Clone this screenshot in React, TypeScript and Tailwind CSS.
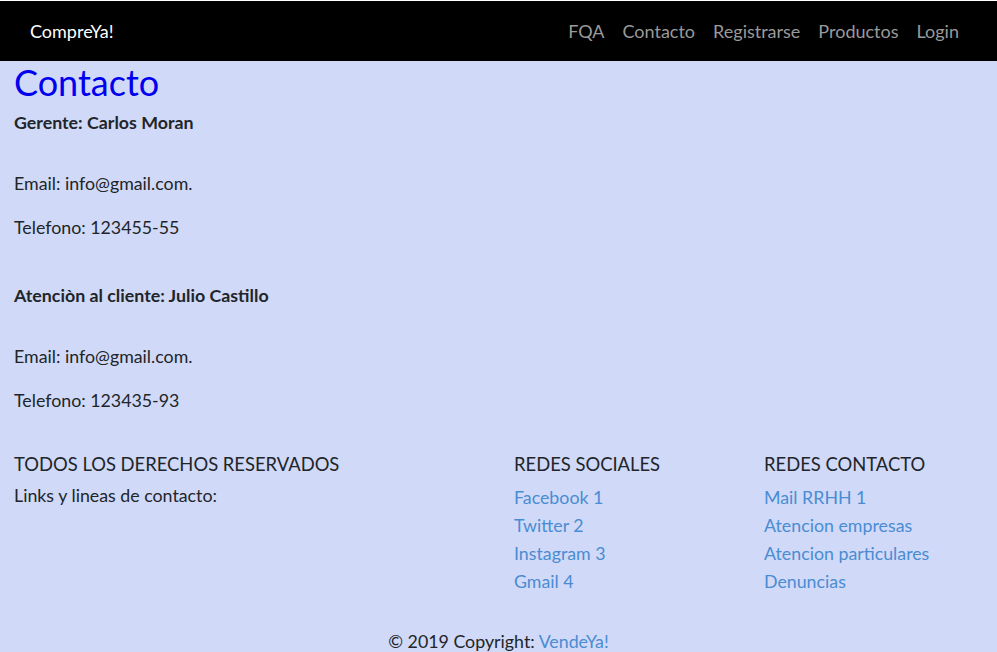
import React from "react";

export default function App() {
  const font = { fontFamily: "Lato, 'Noto Sans', sans-serif" };
  return (
    <div className="min-h-[652px] w-full bg-[#d0d9f7] text-[17.8px] text-[#212529]" style={font}>
      <div className="h-px bg-white" />
      <nav className="flex h-[60px] items-center justify-between bg-black pl-[30px] pr-[38px]">
        <span className="text-[18px] text-white">CompreYa!</span>
        <div className="flex gap-[18px] text-[18px] text-[#9a9a9a]">
          <span>FQA</span>
          <span>Contacto</span>
          <span>Registrarse</span>
          <span>Productos</span>
          <span>Login</span>
        </div>
      </nav>
      <main className="px-[14px]">
        <h1 className="text-[36px] leading-[42px] text-[#0000ee]">Contacto</h1>
        <p className="mt-[7px] text-[17.8px] font-bold leading-[24px]">Gerente: Carlos Moran</p>
        <p className="mt-[37px] leading-[24px]">Email: info@gmail.com.</p>
        <p className="mt-[20px] leading-[24px]">Telefono: 123455-55</p>
        <p className="mt-[44px] text-[17.8px] font-bold leading-[24px]">Atenciòn al cliente: Julio Castillo</p>
        <p className="mt-[37px] leading-[24px]">Email: info@gmail.com.</p>
        <p className="mt-[20px] leading-[24px]">Telefono: 123435-93</p>
      </main>
      <footer className="mt-[40px]">
        <div className="grid grid-cols-[500px_250px_1fr] px-[14px]">
          <div>
            <h5 className="text-[18.4px] leading-[24px]">TODOS LOS DERECHOS RESERVADOS</h5>
            <p className="mt-[7px] leading-[24px]">Links y lineas de contacto:</p>
          </div>
          <div>
            <h5 className="text-[18.4px] leading-[24px]">REDES SOCIALES</h5>
            <ul className="mt-[7px] text-[#4a8cd3]">
              <li className="leading-[28px]">Facebook 1</li>
              <li className="leading-[28px]">Twitter 2</li>
              <li className="leading-[28px]">Instagram 3</li>
              <li className="leading-[28px]">Gmail 4</li>
            </ul>
          </div>
          <div>
            <h5 className="text-[18.4px] leading-[24px]">REDES CONTACTO</h5>
            <ul className="mt-[7px] text-[#4a8cd3]">
              <li className="leading-[28px]">Mail RRHH 1</li>
              <li className="leading-[28px]">Atencion empresas</li>
              <li className="leading-[28px]">Atencion particulares</li>
              <li className="leading-[28px]">Denuncias</li>
            </ul>
          </div>
        </div>
        <div className="mt-[35px] text-center leading-[22px]">
          © 2019 Copyright: <span className="text-[#4a8cd3]">VendeYa!</span>
        </div>
      </footer>
    </div>
  );
}
